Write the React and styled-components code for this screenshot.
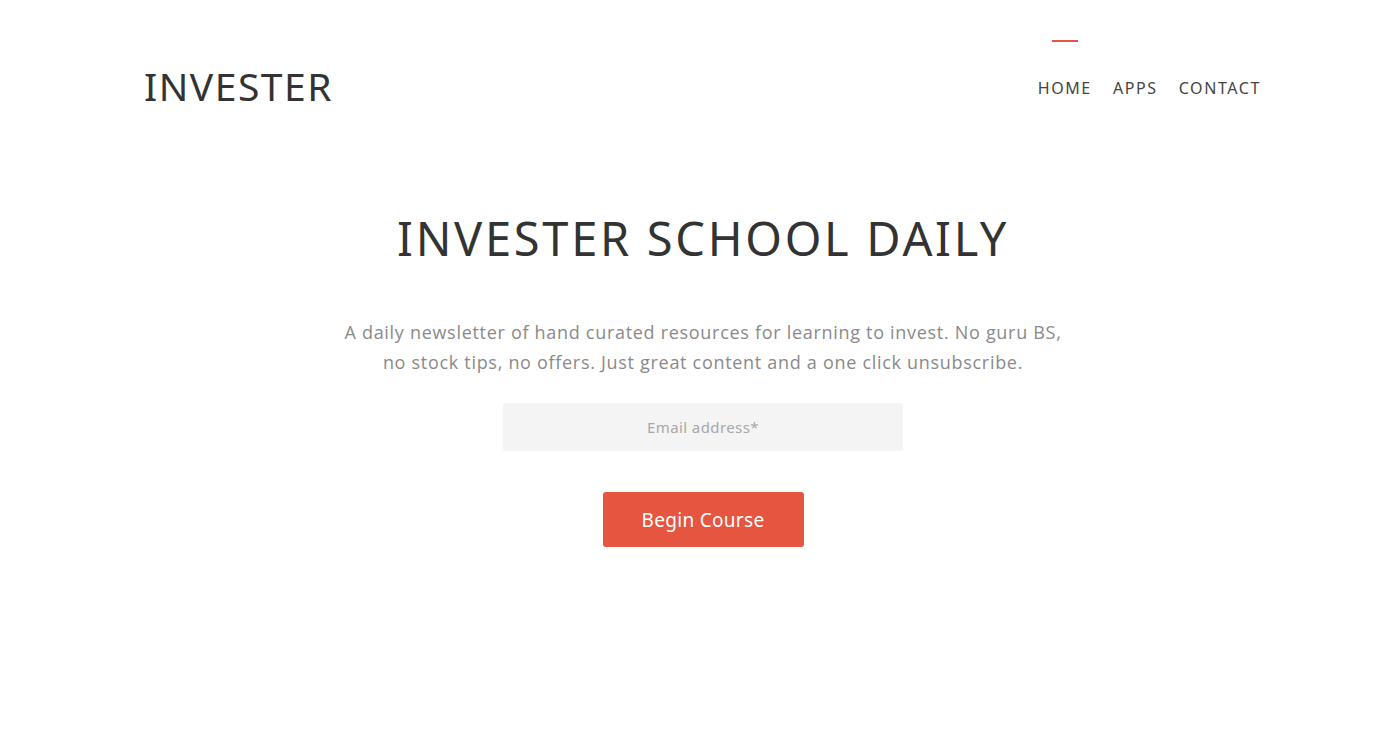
import React from 'react';
import styled, { createGlobalStyle } from 'styled-components';

const GlobalStyle = createGlobalStyle`
  * { box-sizing: border-box; }
  body {
    margin: 0;
    background: #fff;
    font-family: "Open Sans", "Noto Sans", sans-serif;
  }
`;

const Page = styled.div`
  width: 100%;
  min-height: 731px;
`;

const Header = styled.header`
  display: flex;
  justify-content: space-between;
  align-items: flex-start;
  padding: 0 139px 0 144px;
`;

const Logo = styled.div`
  margin-top: 65px;
  font-family: "Noto Sans", sans-serif;
  font-size: 39px;
  line-height: 42px;
  font-weight: 400;
  color: #333;
  letter-spacing: 1.5px;
`;

const Nav = styled.nav`
  display: flex;
  gap: 21px;
  padding-top: 79px;
`;

const NavLink = styled.a`
  position: relative;
  font-family: "Noto Sans", sans-serif;
  font-size: 16px;
  line-height: 18px;
  letter-spacing: 1.6px;
  color: #444;
  text-decoration: none;
  cursor: pointer;

  &::before {
    content: '';
    display: ${(p) => (p.$active ? 'block' : 'none')};
    position: absolute;
    top: -39px;
    left: 50%;
    width: 26px;
    height: 2px;
    margin-left: -13px;
    background: #e5553f;
  }
`;

const Hero = styled.section`
  display: flex;
  flex-direction: column;
  align-items: center;
  padding: 101px 0 0 6px;
`;

const Title = styled.h1`
  margin: 0;
  font-family: "Noto Sans", sans-serif;
  font-size: 47px;
  line-height: 60px;
  font-weight: 400;
  color: #333;
  letter-spacing: 2.7px;
`;

const Lead = styled.p`
  margin: 49px 0 0;
  max-width: 760px;
  text-align: center;
  font-size: 18px;
  line-height: 30px;
  letter-spacing: 0.7px;
  color: #8a8a8a;
`;

const Form = styled.form`
  display: flex;
  flex-direction: column;
  align-items: center;
  margin-top: 26px;
`;

const EmailInput = styled.input`
  width: 400px;
  height: 48px;
  border: none;
  outline: none;
  border-radius: 3px;
  background: #f4f4f4;
  text-align: center;
  font-family: "Noto Sans", sans-serif;
  font-size: 15px;
  letter-spacing: 0.4px;
  color: #555;

  &::placeholder {
    color: #a8a8a8;
  }
`;

const Button = styled.button`
  margin-top: 41px;
  width: 201px;
  height: 55px;
  border: none;
  border-radius: 3px;
  background: #e5553f;
  color: #fff;
  font-family: "Noto Sans", sans-serif;
  font-size: 19px;
  letter-spacing: 0.3px;
  cursor: pointer;
`;

function App() {
  return (
    <Page>
      <GlobalStyle />
      <Header>
        <Logo>INVESTER</Logo>
        <Nav>
          <NavLink $active>HOME</NavLink>
          <NavLink>APPS</NavLink>
          <NavLink>CONTACT</NavLink>
        </Nav>
      </Header>
      <Hero>
        <Title>INVESTER SCHOOL DAILY</Title>
        <Lead>
          A daily newsletter of hand curated resources for learning to invest. No guru BS,
          <br />
          no stock tips, no offers. Just great content and a one click unsubscribe.
        </Lead>
        <Form onSubmit={(e) => e.preventDefault()}>
          <EmailInput type="email" placeholder="Email address*" />
          <Button type="submit">Begin Course</Button>
        </Form>
      </Hero>
    </Page>
  );
}

export default App;
